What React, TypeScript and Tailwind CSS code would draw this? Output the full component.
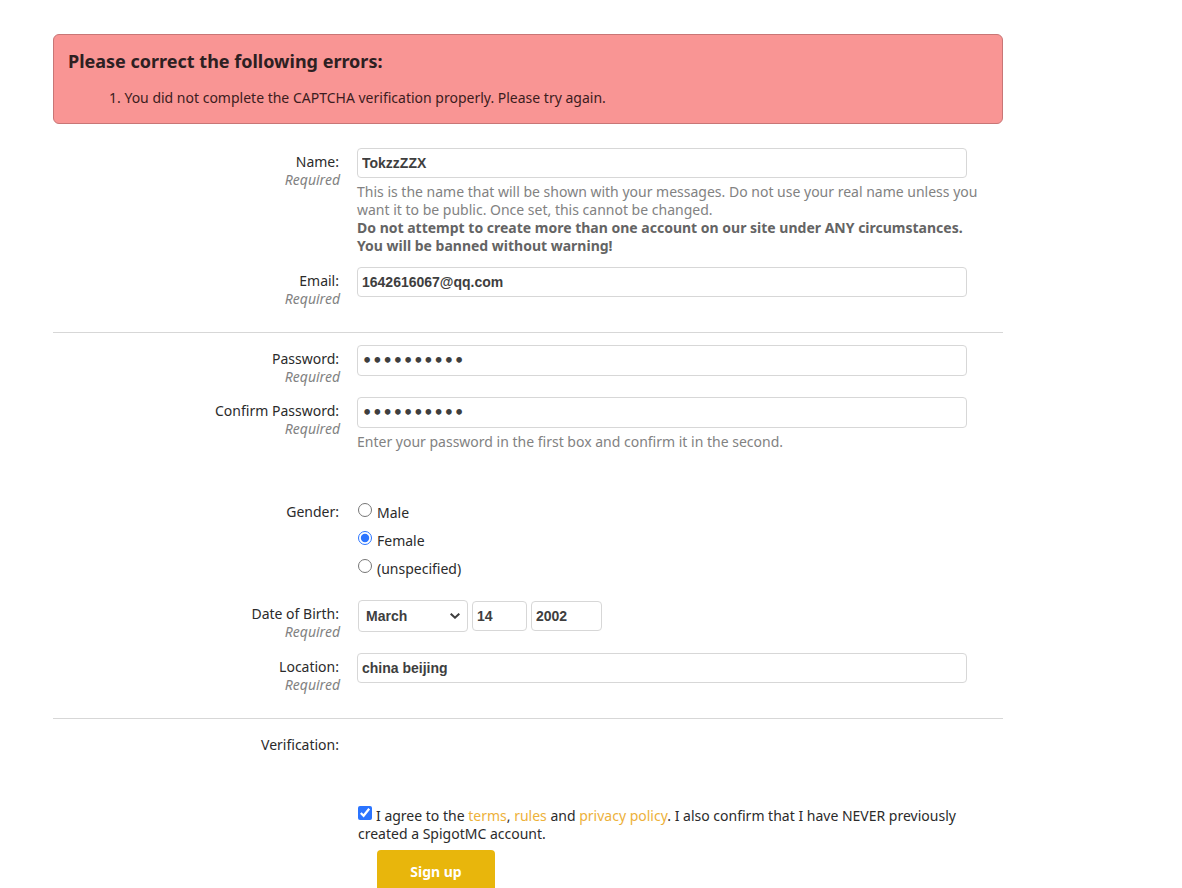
import type { ReactNode } from 'react';

const inputBase = 'rounded border border-[#d7d7d7] bg-white px-1 text-[#3e3e3e] outline-none';
const textInput = `${inputBase} h-[30px] font-['Liberation_Sans',sans-serif] text-[14px] font-bold`;
const passwordInput = `${inputBase} block h-[31px] w-full font-['DejaVu_Sans',sans-serif] text-[16px] font-bold`;

type RowProps = {
  label: string;
  htmlFor?: string;
  required?: boolean;
  className?: string;
  children?: ReactNode;
};

function Row({ label, htmlFor, required, className = '', children }: RowProps) {
  return (
    <div className={`flex gap-[17px] pr-9 ${className}`}>
      <div className="w-[287px] shrink-0 pt-[5px] text-right">
        {htmlFor ? (
          <label htmlFor={htmlFor} className="block pr-px">
            {label}
          </label>
        ) : (
          <span className="block pr-px">{label}</span>
        )}
        {required && <span className="block text-[#828282] italic">Required</span>}
      </div>
      <div className="min-w-0 flex-1">{children}</div>
    </div>
  );
}

const genders = ['Male', 'Female', '(unspecified)'];
const months = [
  'January', 'February', 'March', 'April', 'May', 'June',
  'July', 'August', 'September', 'October', 'November', 'December',
];

export default function App() {
  return (
    <main className="h-screen overflow-hidden bg-white pt-[34px] pl-[53px] font-['Noto_Sans',sans-serif] text-[14px] leading-[18px] text-[#2b2b2b]">
      <div className="max-w-[950px]">
        <section
          role="alert"
          className="h-[90px] rounded-md border border-[#c87676] bg-[#f99594] px-[14px] pt-[14px] text-[#3c1c20]"
        >
          <h1 className="text-[18px] leading-6 font-bold text-[#2d2022]">
            Please correct the following errors:
          </h1>
          <ol className="mt-4 list-inside list-decimal pl-[41px]">
            <li>You did not complete the CAPTCHA verification properly. Please try again.</li>
          </ol>
        </section>

        <form onSubmit={(e) => e.preventDefault()}>
          <Row label="Name:" htmlFor="name" required className="mt-6">
            <input id="name" type="text" defaultValue="TokzzZZX" className={`${textInput} block w-full`} />
            <p className="mt-[5px] -mr-4 text-[#828282]">
              This is the name that will be shown with your messages. Do not use your real name unless you
              want it to be public. Once set, this cannot be changed.
              <br />
              <b className="text-[#646464]">
                Do not attempt to create more than one account on our site under ANY circumstances.
                <br />
                You will be banned without warning!
              </b>
            </p>
          </Row>

          <Row label="Email:" htmlFor="email" required className="mt-3">
            <input id="email" type="text" defaultValue="1642616067@qq.com" className={`${textInput} block w-full`} />
          </Row>

          <hr className="mt-6 border-[#d7d7d7]" />

          <Row label="Password:" htmlFor="password" required className="mt-3">
            <input id="password" type="password" defaultValue="spigot1234" className={passwordInput} />
          </Row>

          <Row label="Confirm Password:" htmlFor="confirm" required className="mt-[11px]">
            <input id="confirm" type="password" defaultValue="spigot1234" className={passwordInput} />
            <p className="mt-[5px] text-[#828282]">
              Enter your password in the first box and confirm it in the second.
            </p>
          </Row>

          <Row label="Gender:" className="mt-[47px]">
            <div role="radiogroup" aria-label="Gender" className="flex flex-col gap-2 pt-[5px] pl-px leading-5">
              {genders.map((gender) => (
                <label key={gender} className="flex items-start gap-[5px]">
                  <input
                    type="radio"
                    name="gender"
                    defaultChecked={gender === 'Female'}
                    className="size-[14px] accent-[#2b74ff]"
                  />
                  {gender}
                </label>
              ))}
            </div>
          </Row>

          <Row label="Date of Birth:" htmlFor="month" required className="mt-[21px]">
            <div className="flex items-center gap-1 pl-px">
              <div className="relative w-[110px]">
                <select
                  id="month"
                  defaultValue="March"
                  className="block h-8 w-full appearance-none rounded border border-[#d7d7d7] bg-white px-[7px] font-['Liberation_Sans',sans-serif] text-[14px] font-bold text-[#3e3e3e]"
                >
                  {months.map((month) => (
                    <option key={month}>{month}</option>
                  ))}
                </select>
                <svg
                  viewBox="0 0 10 6"
                  className="pointer-events-none absolute top-[13px] right-2 h-[6px] w-[10px]"
                  aria-hidden="true"
                >
                  <path d="M0.7 0.7 L5 4.7 L9.3 0.7" fill="none" stroke="#3e3e3e" strokeWidth="2" />
                </svg>
              </div>
              <input aria-label="Day" type="text" defaultValue="14" className={`${textInput} w-[55px]`} />
              <input aria-label="Year" type="text" defaultValue="2002" className={`${textInput} w-[71px]`} />
            </div>
          </Row>

          <Row label="Location:" htmlFor="location" required className="mt-3">
            <input id="location" type="text" defaultValue="china beijing" className={`${textInput} block w-full`} />
          </Row>

          <hr className="mt-6 border-[#d7d7d7]" />

          <Row label="Verification:" className="mt-3" />

          <div className="mt-[52px] pr-9 pl-[305px]">
            <input
              id="agree"
              type="checkbox"
              defaultChecked
              className="mr-1 size-[14px] align-[1px] accent-[#2b74ff]"
            />
            <label htmlFor="agree">I agree to the </label>
            <a href="#terms" className="text-[#edb13a]">terms</a>,{' '}
            <a href="#rules" className="text-[#edb13a]">rules</a> and{' '}
            <a href="#privacy" className="text-[#edb13a]">privacy policy</a>. I also confirm that I have
            NEVER previously created a SpigotMC account.
          </div>
          <button
            type="submit"
            className="mt-[7px] ml-[324px] block h-11 w-[118px] rounded bg-[#e8b60c] text-center font-bold text-white"
          >
            Sign up
          </button>
        </form>
      </div>
    </main>
  );
}
